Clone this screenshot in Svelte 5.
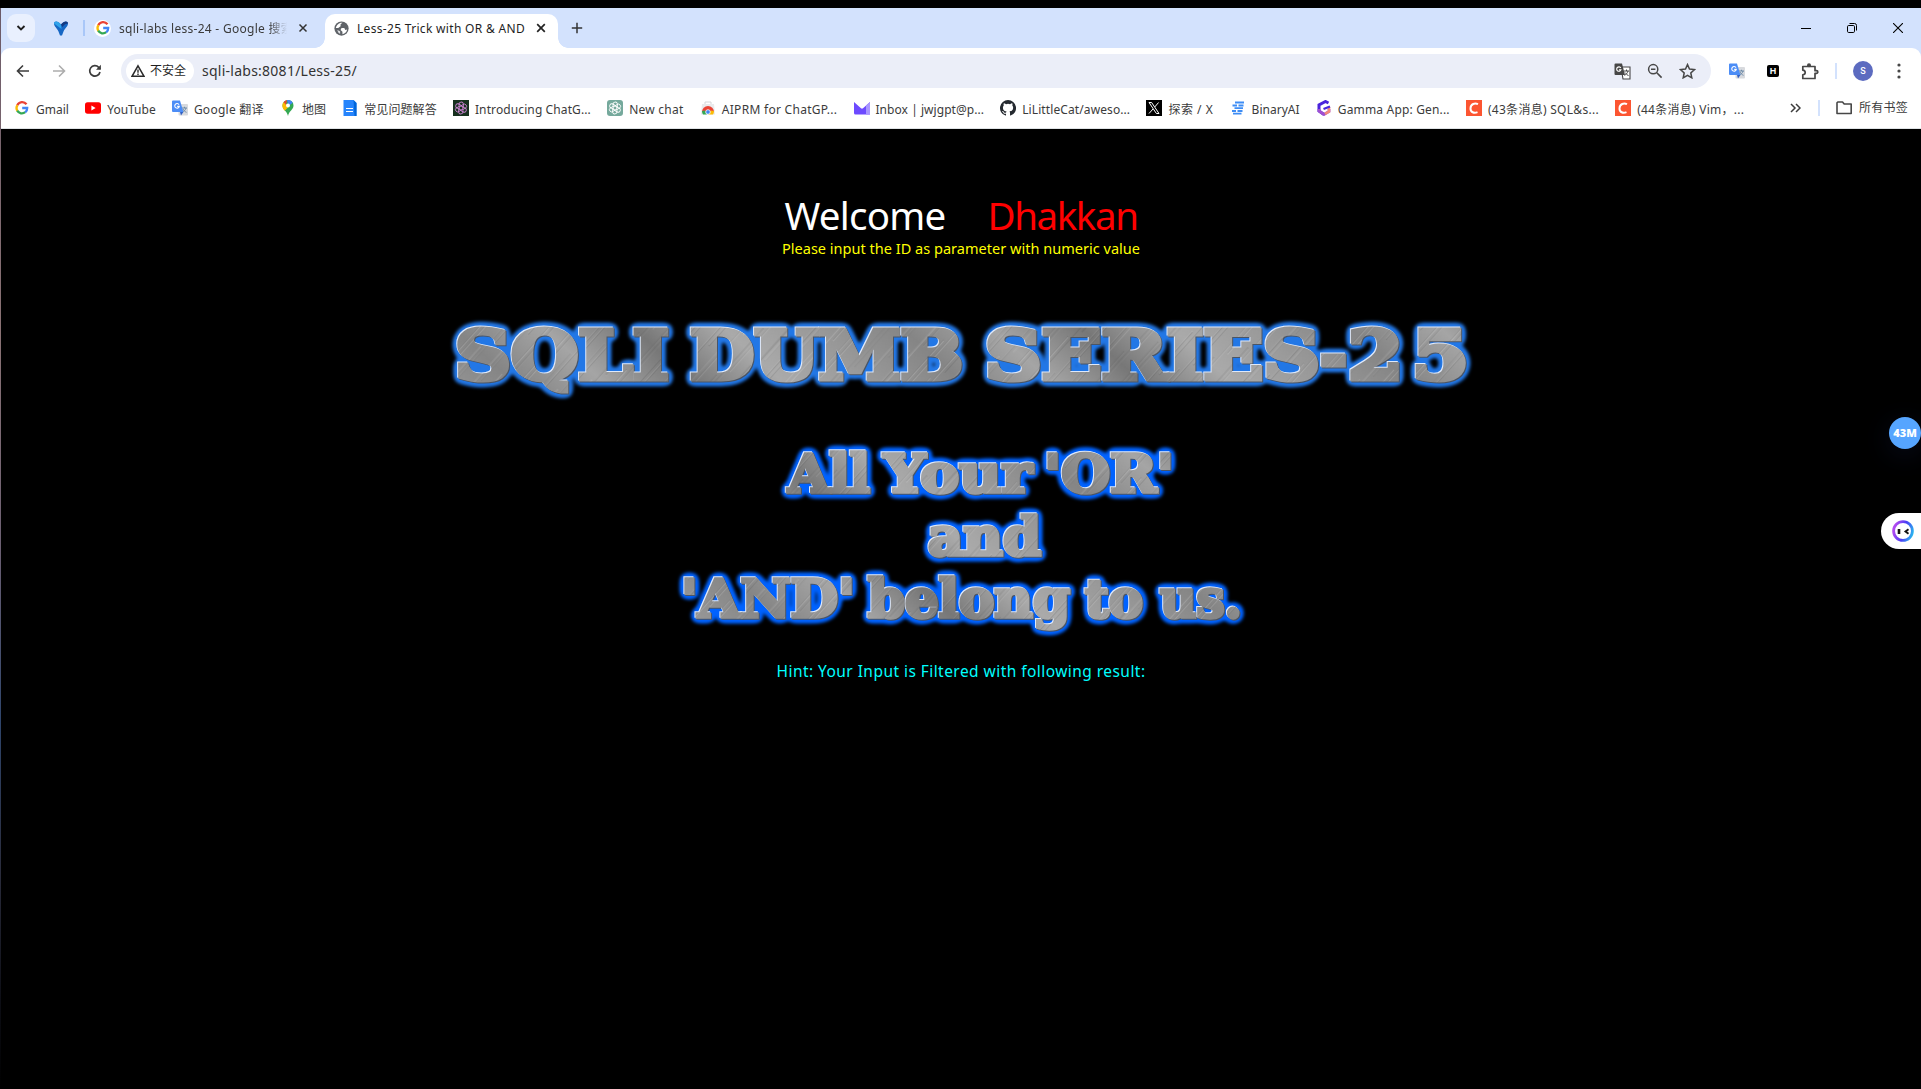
<script>
  // Spreads a label's letters so that it fills the given width.
  function fit(node, width) {
    const natural = node.getBoundingClientRect().width;
    const count = [...node.textContent].length;
    node.style.letterSpacing = `${(width - natural) / count}px`;
  }

  const bookmarks = [
    { icon: 'google', label: 'Gmail', w: 33 },
    { icon: 'youtube', label: 'YouTube', w: 48.5 },
    { icon: 'translate', label: 'Google 翻译', w: 70 },
    { icon: 'map', label: '地图', w: 24 },
    { icon: 'doc', label: '常见问题解答', w: 72.5 },
    { icon: 'gptdark', label: 'Introducing ChatG...', w: 116 },
    { icon: 'gpt', label: 'New chat', w: 54.5 },
    { icon: 'store', label: 'AIPRM for ChatGP...', w: 115.5 },
    { icon: 'proton', label: 'Inbox | jwjgpt@p...', w: 108.5 },
    { icon: 'github', label: 'LiLittleCat/aweso...', w: 108 },
    { icon: 'x', label: '探索 / X', w: 45 },
    { icon: 'binary', label: 'BinaryAI', w: 48 },
    { icon: 'gamma', label: 'Gamma App: Gen...', w: 112 },
    { icon: 'csdn', label: '(43条消息) SQL&s...', w: 111 },
    { icon: 'csdn', label: '(44条消息) Vim，...', w: 107 }
  ];

  const series = [
    { t: 'SQLI', x: 455, w: 214 },
    { t: 'DUMB', x: 690, w: 273 },
    { t: 'SERIES', x: 985, w: 335 },
    { t: '-', x: 1320, w: 27 },
    { t: '2', x: 1348, w: 55 },
    { t: '5', x: 1412, w: 57 }
  ];

  const motto = [
    { t: 'All', x: 788, y: 492, w: 82 },
    { t: 'Your', x: 884, y: 492, w: 148 },
    { t: "'OR'", x: 1044, y: 492, w: 130 },
    { t: 'and', x: 928, y: 554.5, w: 113 },
    { t: "'AND'", x: 681, y: 617, w: 174 },
    { t: 'belong', x: 868, y: 617, w: 202 },
    { t: 'to', x: 1085, y: 617, w: 58 },
    { t: 'us.', x: 1160, y: 617, w: 82 }
  ];

  const grain = Array.from({ length: 110 }, (_, i) => ({
    y: (i * 37.3) % 220,
    x: (i * 61) % 300,
    light: i % 2 === 0,
    o: 0.06 + ((i * 7) % 10) / 60
  }));
</script>

{#snippet icon(name)}
  <svg class="ic" viewBox="0 0 16 16">
    {#if name === 'google'}
      <path d="M12.500 4.300A5.400 5.400 0 0 0 3.300 5.300" fill="none" stroke="#ea4335" stroke-width="2.300" />
      <path d="M3.400 5.100a5.400 5.400 0 0 0 0 5.800" fill="none" stroke="#fbbc05" stroke-width="2.300" />
      <path d="M3.200 10.700a5.400 5.400 0 0 0 8 1.500" fill="none" stroke="#34a853" stroke-width="2.300" />
      <path d="M8.200 8h5a5.300 5.300 0 0 1-2 4.300" fill="none" stroke="#4285f4" stroke-width="2.300" />
    {:else if name === 'youtube'}
      <rect x="0" y="2.3" width="16" height="11.4" rx="2.6" fill="#f00" />
      <path d="M6.4 5.5v5l4.2-2.5z" fill="#fff" />
    {:else if name === 'translate'}
      <rect x="6.5" y="4" width="9.5" height="11.5" rx="1" fill="#d8dade" />
      <path d="M10 8h5M12.500 6.800V8M14 8c-.4 2-2 3.500-3.600 4.200M11 9c.6 1.500 2 2.700 3.500 3.300" fill="none" stroke="#6c8aa8" stroke-width="1" />
      <path d="M1 .5h7l3.400 11.500H1a1 1 0 0 1-1-1V1.500a1 1 0 0 1 1-1z" fill="#4c8df6" />
      <path d="M8 12h3.400L9 15.500z" fill="#2f5fc4" />
      <path d="M7 4.600A2.300 2.300 0 1 0 7.300 6.400H5.200" fill="none" stroke="#fff" stroke-width="1.100" />
    {:else if name === 'map'}
      <path d="M8 0a5.500 5.500 0 0 1 5.500 5.500C13.500 9.500 9 11 8 16 7 11 2.500 9.500 2.500 5.500A5.500 5.500 0 0 1 8 0z" fill="#34a853" />
      <path d="M3.800 2L8 5.500 3.500 9.200A6 6 0 0 1 3.800 2z" fill="#fbbc04" />
      <path d="M3.700 2A5.500 5.500 0 0 1 7 .1L6 5z" fill="#ea4335" />
      <path d="M7 .1a5.500 5.500 0 0 1 5.800 2.700L8.500 6z" fill="#4285f4" />
      <path d="M3.200 8.700L6 5l2 2.500-3.300 3.200z" fill="#fbbc04" />
      <circle cx="8" cy="5.500" r="2" fill="#fff" />
    {:else if name === 'doc'}
      <path d="M1.500 0h10l3 3v13h-13z" fill="#2684fc" />
      <path d="M11.500 0l3 3v13h-2z" fill="#0066da" />
      <path d="M4 8.500h7M4 11.500h7" stroke="#fff" stroke-width="1.200" />
    {:else if name === 'gptdark' || name === 'gpt'}
      <rect width="16" height="16" rx={name === 'gpt' ? 3 : 0} fill={name === 'gpt' ? '#75a99c' : '#17301f'} />
      <g fill="none" stroke={name === 'gpt' ? '#fff' : '#c983d0'} stroke-width=".9">
        {#each [0, 60, 120, 180, 240, 300] as a}
          <path d="M8 5.800L10 4.600a2.200 2.200 0 0 1 3 3.200L9.800 9.600V7" transform="rotate({a} 8 8)" />
        {/each}
      </g>
    {:else if name === 'store'}
      <path d="M2 4h12l1 10.500H1z" fill="#e9eaec" />
      <path d="M5 4V2h6v2" fill="none" stroke="#d4d6d9" stroke-width="1" />
      <path d="M2 12a6 6 0 0 1 12 0z" fill="#ea4335" />
      <path d="M2 11A6 6 0 0 0 3 14.500h4l-2-4z" fill="#34a853" />
      <path d="M14 11A6 6 0 0 1 13 14.500H8l3-4z" fill="#fbbc04" />
      <circle cx="8" cy="12" r="2.300" fill="#4285f4" stroke="#fff" stroke-width=".8" />
    {:else if name === 'proton'}
      <path d="M0 2l7 6.200a1.500 1.500 0 0 0 2 0L16 2v12.500H1.500A1.500 1.500 0 0 1 0 13z" fill="#6d4aff" />
      <path d="M12 5.600L16 2v12.500h-4z" fill="#a997ff" />
    {:else if name === 'github'}
      <path fill="#24292f" d="M8 0a8 8 0 0 0-2.530 15.590c.4.070.55-.17.550-.38v-1.490c-2.010.37-2.530-.49-2.690-.94-.09-.23-.48-.94-.82-1.130-.28-.15-.68-.52-.01-.53.630-.01 1.080.58 1.230.82.720 1.210 1.870.870 2.330.660.070-.52.280-.87.510-1.070-1.780-.2-3.640-.89-3.640-3.950 0-.87.310-1.590.82-2.150-.08-.2-.36-1.020.08-2.120 0 0 .67-.21 2.200.820a7.500 7.500 0 0 1 4 0c1.530-1.040 2.200-.82 2.200-.82.440 1.100.160 1.920.080 2.120.510.560.820 1.270.820 2.150 0 3.070-1.870 3.750-3.650 3.950.290.250.540.730.540 1.480v2.200c0 .210.150.460.550.380A8 8 0 0 0 8 0z" />
    {:else if name === 'x'}
      <rect width="16" height="16" fill="#000" />
      <path d="M3 2.500h2.600L13 13.500h-2.600z" fill="none" stroke="#fff" stroke-width="1" />
      <path d="M12.600 2.500L8.700 7M7 9l-4 4.500" stroke="#fff" stroke-width="1" />
    {:else if name === 'binary'}
      <path d="M5 2.500h9M2.500 5.500h4.500M8.500 5.500h5M4.500 8.200h8.500M2 11h4M7.500 11h5M3 13.600h8.500" stroke="#3e8df5" stroke-width="1.800" />
    {:else if name === 'gamma'}
      <path d="M12.500 3L9.500 1.500 3 5v6l5 3.500" fill="none" stroke="#4a23dc" stroke-width="3" />
      <path d="M3 9v2l5 3.500 5-3V9" fill="none" stroke="#a04fd0" stroke-width="2.800" />
      <path d="M9 13.900l4-2.400V7" fill="none" stroke="#f58a78" stroke-width="2.500" />
      <path d="M14 6.500L7.500 9" stroke="#4a23dc" stroke-width="2.400" />
    {:else if name === 'csdn'}
      <rect width="16" height="16" fill="#fc5531" />
      <path d="M12 4.200C9 2.800 4.800 3.600 4.500 8.200c-.2 4.300 3.700 5.200 7 3.900" fill="none" stroke="#fff" stroke-width="2" />
    {/if}
  </svg>
{/snippet}

<div class="screen">
  <div class="window">
    <div class="tabs">
      <button class="drop" aria-label="Search tabs">
        <svg width="10" height="10" viewBox="0 0 10 10"><path d="M1.500 3L5 6.500 8.500 3" fill="none" stroke="#1f1f1f" stroke-width="1.900" /></svg>
      </button>
      <svg class="ylogo" width="16" height="16" viewBox="0 0 16 16">
        <path d="M1 3.500C1 .8 5 .5 8 4.500 11 .5 15 .8 15 3.500c0 3-3 4.500-4.500 8L9 15.500H7L5.500 11.500C4 8 1 6.500 1 3.500z" fill="#1667c4" />
        <path d="M1 3.500C1 .8 5 .5 8 4.500L8.500 9C6 7 3.500 5.500 1 3.500z" fill="#2fa3ea" />
        <path d="M15 3.500c0-2.700-4-3-7 1L9.500 7C11 4.500 13 3.500 15 3.500z" fill="#163a80" />
      </svg>
      <span class="sep"></span>
      <div class="tab idle">
        <span class="round">{@render icon('google')}</span>
        <span class="clip"><span class="label" use:fit={174}>sqli-labs less-24 - Google 搜索</span></span>
        <svg width="10" height="10" viewBox="0 0 10 10"><path d="M1.500 1.500l7 7M8.500 1.500l-7 7" stroke="#333" stroke-width="1.500" /></svg>
      </div>
      <div class="tab active">
        <svg class="globe" width="15" height="15" viewBox="0 0 16 16">
          <circle cx="8" cy="8" r="7.600" fill="#5f6368" />
          <path d="M9 1.800L7 3.500v2L4.500 7.500H2c.5-3 3-6 7-5.700zM8 7.500h3l1 2 2-.5c-.5 2.500-2 4.500-5 5v-2.500L7 9.500z" fill="#fff" />
          <path d="M3.500 9.500l3 1.500v2.500c-1.500-.5-2.500-2-3-4z" fill="#dfe1e4" />
        </svg>
        <span class="t2"><span class="label" use:fit={168}>Less-25 Trick with OR &amp; AND</span></span>
        <svg width="10" height="10" viewBox="0 0 10 10"><path d="M1.200 1.200l7.600 7.600M8.800 1.200l-7.600 7.600" stroke="#222" stroke-width="1.700" /></svg>
      </div>
      <svg class="plus" width="12" height="12" viewBox="0 0 12 12"><path d="M6 .8v10.400M.8 6h10.400" stroke="#333" stroke-width="1.500" /></svg>
      <div class="controls">
        <svg width="10" height="10" viewBox="0 0 10 10"><path d="M0 5.500h10" stroke="#000" /></svg>
        <svg width="10" height="10" viewBox="0 0 10 10"><rect x=".5" y="2.500" width="7" height="7" rx="1.200" fill="none" stroke="#000" /><path d="M2.500 .5h5a2 2 0 0 1 2 2v5" fill="none" stroke="#000" /></svg>
        <svg width="10" height="10" viewBox="0 0 10 10"><path d="M0 0l10 10M10 0L0 10" stroke="#000" stroke-width="1.100" /></svg>
      </div>
    </div>

    <div class="chrome">
      <div class="toolbar">
        <svg class="nav" width="14" height="14" viewBox="0 0 14 14"><path d="M13 7H2M7 1.500L1.500 7 7 12.500" fill="none" stroke="#3c3c3c" stroke-width="1.600" /></svg>
        <svg class="nav" width="14" height="14" viewBox="0 0 14 14"><path d="M1 7h11M7 1.500L12.500 7 7 12.500" fill="none" stroke="#adadad" stroke-width="1.600" /></svg>
        <svg class="nav" width="14" height="14" viewBox="0 0 14 14"><path d="M12 8a5.200 5.200 0 1 1-1.300-4.700L12.200 5" fill="none" stroke="#3c3c3c" stroke-width="1.700" /><path d="M12.900 .8v5H8z" fill="#3c3c3c" /></svg>
        <div class="omni">
          <span class="chip">
            <svg width="14" height="14" viewBox="0 0 14 14"><path d="M7 1.800L13 12.300H1z" fill="none" stroke="#2a2a2a" stroke-width="1.500" /><path d="M7 5.500v3.200M7 9.600V11" stroke="#2a2a2a" stroke-width="1.400" /></svg>
            <span class="label">不安全</span>
          </span>
          <span class="url" use:fit={155}>sqli-labs:8081/Less-25/</span>
          <span class="tools">
            <svg width="17" height="17" viewBox="0 0 17 17">
              <path d="M7 4h9v12H9z" fill="#fff" stroke="#474747" stroke-width="1.100" />
              <path d="M1.500 .5h6.500l3 11.500H1.500a1 1 0 0 1-1-1v-9.500a1 1 0 0 1 1-1z" fill="#474747" />
              <path d="M6.800 5A2.200 2.200 0 1 0 7 6.700H5" fill="none" stroke="#fff" stroke-width="1.100" />
              <path d="M10 8h5M12.500 6.500V8M14 8c-.5 2-2 3.500-3.500 4.500M11 9.500l3.500 3.500" fill="none" stroke="#474747" />
            </svg>
            <svg width="16" height="16" viewBox="0 0 16 16"><circle cx="6.200" cy="6.200" r="4.600" fill="none" stroke="#474747" stroke-width="1.500" /><path d="M4 6.200h4.400M9.800 9.800l4.800 4.800" stroke="#474747" stroke-width="1.600" /></svg>
            <svg width="17" height="16" viewBox="0 0 17 16"><path d="M8.500 1.600l2 4.500 5 .5-3.700 3.300 1 4.900-4.300-2.500-4.300 2.500 1-4.900L1.500 6.600l5-.5z" fill="none" stroke="#474747" stroke-width="1.500" /></svg>
          </span>
        </div>
        <div class="ext">
          <span class="e1">{@render icon('translate')}</span>
          <span class="h">H</span>
          <svg class="puz" width="18" height="17" viewBox="0 0 18 17"><path d="M1.800 3.500H14v4.200h1.500a1 1 0 0 1 0 2.600H14v5.200H1.800v-3.700c3.200-.3 3.200-4.300 0-4.600z" fill="none" stroke="#474747" stroke-width="1.700" stroke-linejoin="round" /><circle cx="8" cy="2.200" r="2" fill="#474747" /></svg>
          <span class="sep2"></span>
          <span class="avatar">S</span>
          <svg class="dots" width="4" height="16" viewBox="0 0 4 16"><circle cx="2" cy="2" r="1.600" fill="#474747" /><circle cx="2" cy="8" r="1.600" fill="#474747" /><circle cx="2" cy="14" r="1.600" fill="#474747" /></svg>
        </div>
      </div>

      <div class="marks">
        {#each bookmarks as b}
          <span class="mark">
            {@render icon(b.icon)}
            <span class="slot" style="width: {b.w}px"><span class="label" use:fit={b.w}>{b.label}</span></span>
          </span>
        {/each}
        <div class="all">
          <svg width="11" height="10" viewBox="0 0 11 10"><path d="M1 1l4 4-4 4M6 1l4 4-4 4" fill="none" stroke="#3c3c3c" stroke-width="1.500" /></svg>
          <span class="sep3"></span>
          <svg class="folder" width="17" height="14" viewBox="0 0 17 14"><path d="M1.800 1h4.700L8.200 3h7v9.500H1V1.800z" fill="none" stroke="#474747" stroke-width="1.600" stroke-linejoin="round" /></svg>
          <span class="label" use:fit={49}>所有书签</span>
        </div>
      </div>
    </div>

    <main>
      <h1><span class="hello" use:fit={161}>Welcome</span><span class="name" use:fit={150}>Dhakkan</span></h1>
      <p class="ask"><span use:fit={358}>Please input the ID as parameter with numeric value</span></p>

      <svg class="art" width="1921" height="380" viewBox="0 290 1921 380">
        <defs>
          <linearGradient id="sheen" x1="0" x2="1">
            <stop offset="0" stop-color="#999" /><stop offset=".2" stop-color="#858585" />
            <stop offset=".4" stop-color="#a5a5a5" /><stop offset=".6" stop-color="#777" />
            <stop offset=".8" stop-color="#aaa" /><stop offset="1" stop-color="#999" />
          </linearGradient>
          <pattern id="steel" width="300" height="220" patternUnits="userSpaceOnUse" patternTransform="rotate(-48)">
            <rect width="300" height="220" fill="url(#sheen)" />
            {#each grain as g}
              <path d="M{g.x} {g.y}h120M{g.x - 300} {g.y}h120" stroke={g.light ? '#fff' : '#333'} stroke-width="1" opacity={g.o} />
            {/each}
          </pattern>
          {#each [['glowA', '#2277e6'], ['glowB', '#0062ff']] as [id, color]}
            <filter {id} x="400" y="290" width="1120" height="380" filterUnits="userSpaceOnUse" color-interpolation-filters="sRGB">
              <feGaussianBlur in="SourceAlpha" stdDeviation="3.400" />
              <feComponentTransfer><feFuncA type="linear" slope="12" intercept="-.3" /></feComponentTransfer>
              <feGaussianBlur stdDeviation="1.500" result="halo" />
              <feFlood flood-color={color} />
              <feComposite in2="halo" operator="in" result="glow" />
              <feOffset in="SourceAlpha" dx="-.7" dy="-.7" result="up" />
              <feFlood flood-color="#dfe9fa" /><feComposite in2="up" operator="in" result="light" />
              <feOffset in="SourceAlpha" dx=".8" dy=".8" result="down" />
              <feFlood flood-color="#4a5566" /><feComposite in2="down" operator="in" result="dark" />
              <feMerge><feMergeNode in="glow" /><feMergeNode in="dark" /><feMergeNode in="light" /><feMergeNode in="SourceGraphic" /></feMerge>
            </filter>
          {/each}
        </defs>
        <g class="slab big" filter="url(#glowA)">
          {#each series as s}
            <text x={s.x} y="378.500" textLength={s.w} lengthAdjust="spacingAndGlyphs">{s.t}</text>
          {/each}
        </g>
        <g class="slab small" filter="url(#glowB)">
          {#each motto as s}
            <text x={s.x} y={s.y} textLength={s.w} lengthAdjust="spacingAndGlyphs">{s.t}</text>
          {/each}
        </g>
      </svg>
      <p class="hint"><span use:fit={369}>Hint: Your Input is Filtered with following result:</span></p>
    </main>
  </div>

  <div class="edge"></div>
  <div class="badge">43M</div>
  <div class="bot">
    <svg width="22" height="22" viewBox="0 0 22 22">
      <defs><linearGradient id="ring" x1="0" y1=".5" x2="1" y2=".8"><stop offset="0" stop-color="#b04af0" /><stop offset=".5" stop-color="#4a3df5" /><stop offset="1" stop-color="#29b8ee" /></linearGradient></defs>
      <circle cx="11" cy="11" r="9.400" fill="#fff" stroke="url(#ring)" stroke-width="2.800" />
      <path d="M7 9v5" stroke="#111" stroke-width="2.600" />
      <path d="M16.500 9.300l-3 2.200 3 2.200" fill="none" stroke="#111" stroke-width="1.900" />
    </svg>
  </div>
</div>

<style>
  :global(body) { background: #000; overflow: hidden; }
  .screen {
    position: relative; box-sizing: border-box; width: 1921px; height: 1089px; overflow: hidden;
    padding: 8px 0 0 1px; background: #000;
    font-family: "Noto Sans", "Noto Sans CJK SC", sans-serif; color: #3b3b3b;
  }
  .edge { position: absolute; left: 0; top: 8px; width: 1px; height: 1081px; background: linear-gradient(#6b5a68, #8a7274 30%, #6b5f72 50%, #2f456b 66%, #2a2c3c 80%, #0c0d14 92%, #000); }
  .window { width: 1920px; }
  svg { display: block; flex: none; }
  .ic { width: 16px; height: 16px; }
  .label { display: inline-block; white-space: nowrap; font-size: 12px; line-height: 18px; }
  .tabs { display: flex; align-items: center; height: 40px; background: #d3e2fd; }
  .drop { display: grid; place-items: center; width: 28px; height: 28px; margin: 0 0 0 6px; padding: 0; border: 0; border-radius: 9px; background: #e9f0fe; }
  .ylogo { margin-left: 18px; }
  .sep { width: 2px; height: 16px; margin-left: 14px; background: #a9c7f8; }
  .tab { display: flex; align-items: center; }
  .idle { width: 224px; margin-left: 9px; }
  .round { display: grid; place-items: center; width: 17px; height: 17px; border-radius: 50%; background: #fff; }
  .clip { width: 168px; margin: 0 11px 2px 8px; overflow: hidden; white-space: nowrap; height: 18px; line-height: 18px; mask-image: linear-gradient(90deg, #000 90%, transparent); }
  .active { position: relative; box-sizing: border-box; align-self: flex-end; width: 233px; height: 34px; margin-left: 7px; padding: 0 0 6px 9px; border-radius: 10px 10px 0 0; background: #fff; color: #1f1f1f; }
  .active::before, .active::after { content: ""; position: absolute; bottom: 0; width: 10px; height: 10px; }
  .active::before { left: -10px; background: radial-gradient(circle at 0 0, transparent 9.500px, #fff 10px); }
  .active::after { right: -10px; background: radial-gradient(circle at 100% 0, transparent 9.500px, #fff 10px); }
  .t2 { width: 167px; height: 18px; margin: 0 12px 2px 8px; line-height: 18px; white-space: nowrap; }
  .plus { margin-left: 13px; }
  .controls { display: flex; gap: 36px; margin-left: auto; margin-right: 18px; }
  .chrome { height: 81px; box-sizing: border-box; background: linear-gradient(#d3e2fd 10px, #fff 10px); border-bottom: 1px solid #dfe3e6; }
  .toolbar { display: flex; align-items: center; height: 46px; border-radius: 9px 9px 0 0; background: #fff; }
  .nav { margin-left: 15px; margin-right: 7px; }
  .omni { display: flex; align-items: center; box-sizing: border-box; width: 1590px; height: 34px; margin-left: 12px; padding: 0 15px 0 5px; border-radius: 17px; background: #ebeef8; }
  .chip { display: flex; align-items: center; gap: 5px; box-sizing: border-box; width: 68px; height: 24px; padding-left: 5px; border-radius: 12px; background: #fff; color: #1f1f1f; }
  .url { display: inline-block; margin-left: 8px; font-size: 14px; line-height: 20px; white-space: nowrap; color: #333; }
  .tools { display: flex; align-items: center; gap: 16px; margin-left: auto; }
  .ext { display: flex; align-items: center; margin-left: 18px; }
  .h { width: 12px; height: 12px; margin-left: 22px; border-radius: 2px; background: #000; color: #fff; font: bold 9px/12px "Liberation Sans", sans-serif; text-align: center; }
  .puz { margin-left: 22px; }
  .sep2, .sep3 { width: 2px; height: 16px; background: #d3e2fd; }
  .sep2 { margin-left: 16px; }
  .avatar { width: 20px; height: 20px; margin-left: 16px; border-radius: 50%; background: #5c6bc0; color: #fff; font: 500 9px/20px Roboto, sans-serif; text-align: center; }
  .dots { margin-left: 24px; }
  .marks { display: flex; align-items: center; gap: 16.200px; height: 27px; padding: 0 13px 0 13px; }
  .mark { display: flex; flex: none; align-items: center; gap: 6px; }
  .slot { display: block; flex: none; white-space: nowrap; line-height: 18px; height: 18px; }
  .all { display: flex; flex: none; align-items: center; margin-left: auto; }
  .sep3 { margin-left: 17px; }
  .folder { margin: 0 6px 0 16px; }
  main { display: flex; flex-direction: column; height: 960px; background: #000; }
  h1 { display: flex; justify-content: center; gap: 42px; height: 50px; margin: 60px 0 0; font-size: 38.500px; font-weight: 400; line-height: 52px; }
  .hello { color: #fff; }
  .name { color: #f00; }
  p { height: 20px; margin: 0; text-align: center; line-height: 20px; white-space: nowrap; }
  p span { display: inline-block; }
  .ask { margin-top: -1px; font-size: 14.500px; color: #ff0; }
  .art { height: 380px; margin-top: 32px; margin-left: -1px; }
  .slab { font-family: "DejaVu Serif", serif; font-weight: 700; fill: url(#steel); stroke: url(#steel); stroke-linejoin: miter; }
  .big { font-size: 68px; stroke-width: 5; }
  .small { font-size: 52px; stroke-width: 3.500; }
  .hint { margin-top: -9px; font-size: 15.500px; color: #0ff; }
  .badge { position: absolute; left: 1889px; top: 417px; width: 32px; height: 32px; border-radius: 50%; background: #56a5ff; box-shadow: 0 6px 28px #101a3a80; color: #fff; font: 800 11px/32px "Open Sans", sans-serif; text-align: center; }
  .bot { position: absolute; left: 1881px; top: 513px; display: flex; align-items: center; box-sizing: border-box; width: 40px; height: 36px; padding-left: 11px; border-radius: 18px 0 0 18px; background: #fff; }
</style>
